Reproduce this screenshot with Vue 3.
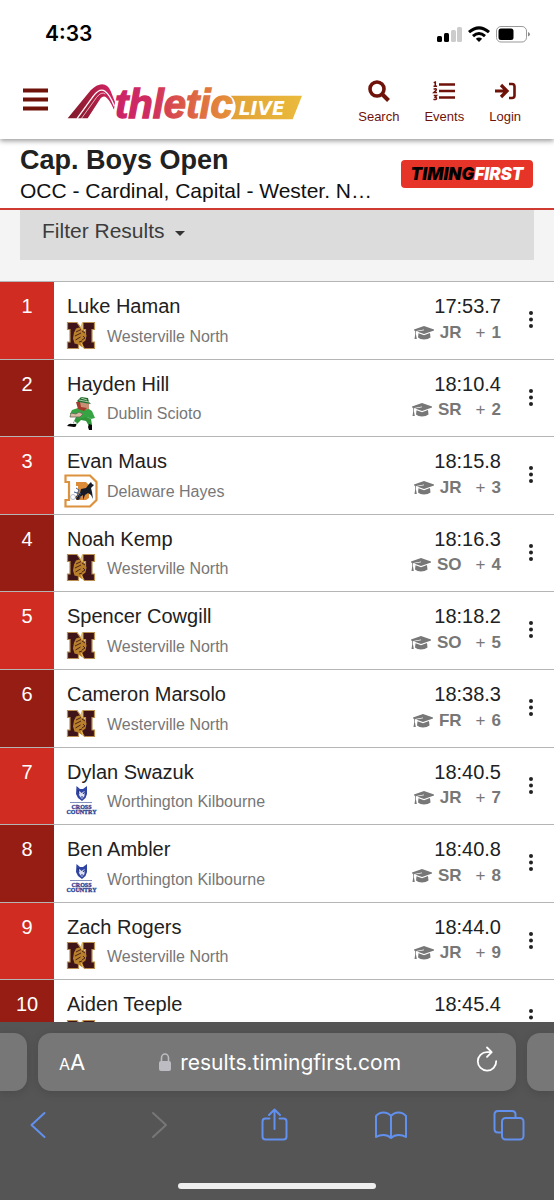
<script setup>
const results = [
  { name: 'Luke Haman', team: 'Westerville North', logo: 'north', time: '17:53.7', year: 'JR' },
  { name: 'Hayden Hill', team: 'Dublin Scioto', logo: 'scioto', time: '18:10.4', year: 'SR' },
  { name: 'Evan Maus', team: 'Delaware Hayes', logo: 'hayes', time: '18:15.8', year: 'JR' },
  { name: 'Noah Kemp', team: 'Westerville North', logo: 'north', time: '18:16.3', year: 'SO' },
  { name: 'Spencer Cowgill', team: 'Westerville North', logo: 'north', time: '18:18.2', year: 'SO' },
  { name: 'Cameron Marsolo', team: 'Westerville North', logo: 'north', time: '18:38.3', year: 'FR' },
  { name: 'Dylan Swazuk', team: 'Worthington Kilbourne', logo: 'kilbourne', time: '18:40.5', year: 'JR' },
  { name: 'Ben Ambler', team: 'Worthington Kilbourne', logo: 'kilbourne', time: '18:40.8', year: 'SR' },
  { name: 'Zach Rogers', team: 'Westerville North', logo: 'north', time: '18:44.0', year: 'JR' },
  { name: 'Aiden Teeple', team: 'Westerville North', logo: 'north', time: '18:45.4', year: 'JR' },
]
</script>

<template>
  <div class="page">
    <div class="status">
      <span class="clock">4:33</span>
      <svg class="signals" width="96" height="18" viewBox="0 0 96 18">
        <rect x="2" y="11" width="5" height="6" rx="1.5" fill="#000" />
        <rect x="9" y="8" width="5" height="9" rx="1.5" fill="#000" />
        <rect x="16" y="5" width="5" height="12" rx="1.5" fill="#ccc" />
        <rect x="22" y="2" width="5" height="15" rx="1.5" fill="#ccc" />
        <g fill="none" stroke="#000" stroke-width="3">
          <path d="M34 7.200Q44 -1.500 54 7.200" />
          <path d="M38 11.200Q44 5.800 50 11.200" />
        </g>
        <path d="M40.800 13.800Q44 11.200 47.200 13.800L44 17Z" />
        <rect x="61.500" y="1.500" width="30" height="15.500" rx="4.500" fill="none" stroke="#999" />
        <rect x="63.500" y="3.500" width="15" height="11.500" rx="2.500" />
        <path d="M93 7v4.500q2-.8 2-2.250t-2-2.250z" fill="#888" />
      </svg>
    </div>

    <header class="site">
      <button class="burger" aria-label="Menu">
        <svg width="25" height="23" viewBox="0 0 25 23">
          <path d="M0 2.500h25M0 11.500h25M0 20.500h25" stroke="#6f1209" stroke-width="3.800" />
        </svg>
      </button>
      <a class="brand" href="#" aria-label="Athletic Live">
        <svg width="236" height="37" viewBox="201 248 708 111">
          <defs>
            <linearGradient id="peak" gradientUnits="userSpaceOnUse" x1="203" y1="353" x2="343" y2="300">
              <stop offset="0" stop-color="#7d1a29" />
              <stop offset=".6" stop-color="#a81e3f" />
              <stop offset="1" stop-color="#cf2263" />
            </linearGradient>
            <linearGradient id="word" gradientUnits="userSpaceOnUse" x1="345" y1="0" x2="700" y2="0">
              <stop offset="0" stop-color="#cb2168" />
              <stop offset=".3" stop-color="#cf2d60" />
              <stop offset=".55" stop-color="#da5549" />
              <stop offset="1" stop-color="#e69637" />
            </linearGradient>
            <linearGradient id="flag" gradientUnits="userSpaceOnUse" x1="692" y1="0" x2="906" y2="0">
              <stop offset="0" stop-color="#e2a137" />
              <stop offset="1" stop-color="#eabb3c" />
            </linearGradient>
          </defs>
          <path fill="url(#peak)" d="M203 354L272 270Q290 252 306 252Q324 253 332 272L345 305L342 328Q328 296 316 289Q308 286 302 294L263 354Z" />
          <path fill="none" stroke="#fff" stroke-width="4" d="M231 355L281 286Q300 262 315 273Q330 284 343 318" />
          <path fill="none" stroke="#fff" stroke-width="2" d="M244 355L289 292Q304 272 316 281" />
          <text class="word" x="345" y="353" fill="url(#word)" stroke="url(#word)">thletic</text>
          <path fill="url(#flag)" d="M692 286H906L878 357H692Q707 340 707 318Q706 298 692 286Z" />
          <text class="live" x="716" y="345">LIVE</text>
        </svg>
      </a>
      <nav>
        <a href="#">
          <svg width="24" height="24" viewBox="0 0 24 24" fill="none" stroke="#6f1209">
            <circle cx="10" cy="10" r="7" stroke-width="3.600" />
            <path d="M15 15l6.500 6.500" stroke-width="4" />
          </svg>
          Search
        </a>
        <a href="#">
          <svg width="24" height="24" viewBox="0 0 24 24" fill="none" stroke="#6f1209">
            <path d="M7 5.500h16M7 12h16M7 18.500h16" stroke-width="2.400" />
            <path d="M1.700 3.600L3.300 3V7M1.500 7.200h3.600M1.600 10.300Q4.600 9 4.300 11L1.900 13.400H5M1.700 16.500H4.500L3.200 18.200Q5.200 18.600 4.300 20.100Q3.200 21 1.500 20.200" stroke-width="1.500" />
          </svg>
          Events
        </a>
        <a href="#">
          <svg width="24" height="24" viewBox="0 0 24 24" fill="none" stroke="#6f1209" stroke-width="3.200">
            <path d="M2 12H13M8 6l6 6-6 6" />
            <path d="M16 5h3q2.500 0 2.500 2.500v9q0 2.500-2.500 2.500H16" stroke-width="2.600" />
          </svg>
          Login
        </a>
      </nav>
    </header>

    <section class="event">
      <div class="titles">
        <h1>Cap. Boys Open</h1>
        <p>OCC - Cardinal, Capital - Wester. N…</p>
      </div>
      <a class="timing" href="#"><span>TIMING</span>FIRST</a>
    </section>

    <main>
      <div class="filter-area">
        <button class="filter">Filter Results <i class="caret"></i></button>
      </div>
      <table>
        <tbody>
          <tr v-for="(r, i) in results" :key="r.name">
            <td class="rank">{{ i + 1 }}</td>
            <td class="athlete">
              <div class="name">{{ r.name }}</div>
              <div class="team">
                <svg v-if="r.logo === 'north'" width="34" height="34" viewBox="0 0 34 34">
                  <path d="M3.500 3.500H13L21.500 15.500V10.500H19V3.500H30.500V10.500H28V23H30.500V29.500H20.500L12 18.500V23H14.500V29.500H3.500V23H6V10.500H3.500Z" fill="#3f1419" stroke="#b98f52" stroke-width="1.200" />
                  <path d="M12 9.500l3-1 2.500 1 3 2 2 5-1 5-4 3 1 4-4-3-4-1-1.500-5 1-6Z" fill="#b87f2c" />
                  <path d="M12 13l5-2.500M11 17l6-3M11.500 21l5-3M18 12l3 2M19 17l2 2-3 2M15 23l3-1" stroke="#4c2418" stroke-width="1" fill="none" />
                  <path d="M18.500 4l-1.500 4 1.500 3M17.500 24l1.500 4" stroke="#e8b84a" stroke-width="1.300" fill="none" />
                </svg>
                <svg v-else-if="r.logo === 'scioto'" width="34" height="34" viewBox="0 0 34 34">
                  <path d="M12 21l9-1 6 3 1 6-3 1-3-5-5-1-5 5-3-2Z" fill="#2f963a" />
                  <path d="M14 12l8-1 6 4 3 7-4 1-4-2-9 2-3-4-5-1 2-4Z" fill="#35a544" />
                  <path d="M15 6l10 1v6l-6 1-4-3Z" fill="#c98f75" />
                  <path d="M12 6l4 0 1 5 6 1-3 3-6-2Z" fill="#a13a2a" />
                  <path d="M13 5l4-4 7 1 1 4 2 2-13-2Z" fill="#216e35" />
                  <path d="M15 4l10 2M17 2l6 2" stroke="#a9c79a" />
                  <path d="M7 17l5 1 3-2 4 2-3 3-6 0-4 0Z" fill="#d8baa3" stroke="#5d6650" stroke-width=".8" />
                  <path d="M10 25l3 2-2 3-2 0Z" fill="#eee" />
                  <path d="M3 30q2-3 5-2l4 0q1 3-2 3ZM25 28l3 1 0 5-3 0-1-3Z" fill="#080808" />
                </svg>
                <svg v-else-if="r.logo === 'hayes'" width="34" height="34" viewBox="0 0 34 34">
                  <path d="M1.500 1.500H26L32.500 8V26L26 32.500H1.500V26H5V8H1.500Z" fill="#fff" stroke="#dd913d" stroke-width="2.200" />
                  <path d="M12 8h10l3 3v13l-3 2H12v-4h2v-10h-2Z" fill="#dc8b38" />
                  <path d="M16 19l1-4 5-1 3-4 2-2 1 2 2 1-2 2-1 1 1 4 1 7-2-4-3-2-3 2-2 5 0-5-3 2-2 3-2-1Z" fill="#151c28" />
                  <path d="M12 14l3 2-2 4M10 18l7 2M13 20l4 3" stroke="#45608c" fill="none" />
                  <circle cx="9" cy="23" r="2.500" fill="none" stroke="#a6aebb" stroke-width=".8" />
                  <circle cx="14" cy="23.500" r="2" fill="none" stroke="#26344e" />
                </svg>
                <svg v-else width="34" height="34" viewBox="0 0 34 34">
                  <path d="M12.500 2l3.500 3h3l4-3v8l-1.500 4-3.500 3-4-3-2-4Z" fill="#3044a4" />
                  <path d="M15.500 7l2 2 3-2 0 5-2.500 3-2.500-3-1-3Z" fill="#dce2f4" />
                  <path d="M14 6l1 4M20.500 8l-1.500 2M17 13h2" stroke="#1d2e78" />
                  <path d="M6 18.500H28" stroke="#8490bd" />
                  <text class="crest" x="17.500" y="25">CROSS</text>
                  <text class="crest" x="17.500" y="30">COUNTRY</text>
                </svg>
                <span>{{ r.team }}</span>
              </div>
            </td>
            <td class="mark">
              <div class="name">{{ r.time }}</div>
              <div class="grade">
                <svg width="20" height="14" viewBox="0 0 20 14" fill="#777">
                  <path d="M10 0L20 3.500V4.500L10 8L3 5.500L10 4.200V3.600L2.300 5Q1.800 6 1.900 8L2.800 13H.5L1.200 8.500V4.800L0 4.400V3.500Z" />
                  <path d="M4.500 7.200L10 9.200L16 7L16.500 11.500Q14 13.500 10 13.500T4 11.500Z" />
                </svg>
                <b class="year">{{ r.year }}</b>
                <span class="plus">+</span>
                <b>{{ i + 1 }}</b>
              </div>
            </td>
            <td class="more">
              <button :aria-label="'Options for ' + r.name">
                <svg width="6" height="22" viewBox="0 0 6 22" fill="#222">
                  <circle cx="3" cy="4" r="2" /><circle cx="3" cy="10.500" r="2" /><circle cx="3" cy="17" r="2" />
                </svg>
              </button>
            </td>
          </tr>
        </tbody>
      </table>
    </main>

    <footer>
      <div class="tabs">
        <div class="stub left"></div>
        <div class="address">
          <button class="reader" aria-label="Page settings"><small>A</small>A</button>
          <button class="url">
            <svg width="12" height="18" viewBox="0 0 12 18">
              <path d="M2.500 9V5a3.500 4 0 0 1 7 0v4" fill="none" stroke="#bcbcc2" stroke-width="1.600" />
              <rect y="8" width="12" height="10" rx="2" fill="#bcbcc2" />
            </svg>
            results.timingfirst.com
          </button>
          <button class="reload" aria-label="Reload">
            <svg width="24" height="28" viewBox="0 0 24 28" fill="none" stroke="#fff" stroke-width="1.800" stroke-linecap="round" stroke-linejoin="round">
              <path d="M16.500 6.200H12A9.200 9.200 0 1 0 21.200 15.200M12 1.500l4.700 4.700-4.700 4.700" />
            </svg>
          </button>
        </div>
        <div class="stub right"></div>
      </div>
      <div class="tools">
        <button aria-label="Back"><svg viewBox="0 0 32 36"><path d="M22.500 6L9.500 18L22.500 30" /></svg></button>
        <button aria-label="Forward" disabled><svg viewBox="0 0 32 36"><path d="M13 6L26 18L13 30" /></svg></button>
        <button aria-label="Share"><svg viewBox="0 0 32 36"><path d="M11.500 11.500H7.500q-3 0-3 3V29.500q0 3 3 3H25.500q3 0 3-3V14.500q0-3-3-3H21.500M16.500 22V2.500M11 8L16.500 2.500L22 8" /></svg></button>
        <button aria-label="Bookmarks"><svg viewBox="0 0 32 36"><path d="M16 9Q13 5.500 8.500 5.500T1 9V30Q4 28 8.500 28T16 31Q19 28 23.500 28T31 30V9Q28 5.500 23.500 5.500T16 9V31" /></svg></button>
        <button aria-label="Tabs"><svg viewBox="0 0 32 36"><path d="M8.500 25.500H5q-3.500 0-3.500-3.500V7.500Q1.500 4 5 4H19q3.500 0 3.500 3.500V10.500" /><rect x="9" y="11" width="21.500" height="21.500" rx="3.500" /></svg></button>
      </div>
      <div class="home"></div>
    </footer>
  </div>
</template>

<style>
body { margin: 0; }
</style>

<style scoped>
.page {
  height: 100vh;
  display: flex;
  flex-direction: column;
  overflow: hidden;
  background: #fff;
  color: #212121;
  font-family: "Liberation Sans", Arial, sans-serif;
}
* { box-sizing: border-box; }
button { border: 0; padding: 0; background: none; font: inherit; color: inherit; }
a { color: inherit; text-decoration: none; }
svg { display: block; flex: none; overflow: visible; }

.status {
  flex: none;
  height: 68px;
  display: flex;
  justify-content: space-between;
  align-items: center;
  padding: 0 23px 0 45px;
  background: #fff;
  color: #000;
  z-index: 3;
}
.clock { font: 600 21px/26px Inter, sans-serif; }

.site {
  flex: none;
  height: 71px;
  display: flex;
  align-items: center;
  padding: 0 33px 4px 23px;
  background: #fff;
  box-shadow: 0 2px 5px #0006;
  z-index: 2;
}
.burger { padding-bottom: 4px; }
.brand { margin-left: 19px; }
.word { font: italic bold 120px "Liberation Sans", Arial, sans-serif; stroke-width: 4px; }
.live { font: italic bold 56px "DejaVu Sans", sans-serif; fill: #fff; }
nav { display: flex; gap: 25px; margin-left: auto; }
nav a {
  display: flex;
  flex-direction: column;
  align-items: center;
  gap: 6px;
  font-size: 13px;
  line-height: 16px;
  color: #6f1209;
}

.event {
  flex: none;
  display: flex;
  align-items: center;
  justify-content: space-between;
  gap: 16px;
  height: 71px;
  padding: 0 21px 0 20px;
  border-bottom: 2px solid #cf3a31;
}
.titles { min-width: 0; }
h1 { margin: 0; font-size: 27px; line-height: 34px; }
p { margin: 0; font-size: 21px; line-height: 28px; color: #111; white-space: nowrap; overflow: hidden; text-overflow: ellipsis; }
.timing {
  flex: none;
  width: 132px;
  border-radius: 4px;
  background: #e73428;
  color: #fff;
  text-align: center;
  font: italic 900 17px/28px Inter, sans-serif;
}
.timing span { color: #000; }

main { flex: 1; min-height: 0; overflow: hidden; }
.filter-area { padding: 0 20px 21px; background: #f4f4f4; }
.filter {
  display: flex;
  align-items: center;
  gap: 10px;
  width: 100%;
  height: 50px;
  padding: 0 22px 8px;
  background: #dcdcdc;
  color: #3c3c3c;
  font-size: 21px;
}
.caret { border: 5px solid transparent; border-top-color: #333; border-bottom: 0; margin-top: 4px; }

table { width: 100%; border-collapse: separate; border-spacing: 0; }
td { padding: 10px 0 8px; border-top: 1px solid #b5b5b5; vertical-align: top; }
.rank { width: 54px; background: #d02c21; color: #fff; text-align: center; font-size: 20px; line-height: 1.43; }
tr:nth-child(even) .rank { background: #961d14; }
.athlete { padding-left: 13px; }
.name { font-size: 20px; line-height: 1.43; }
.team { display: flex; align-items: center; gap: 9px; height: 30px; font-size: 16px; color: #777; }
.team svg { margin: -2px 0 -2px -3px; }
.team span { padding-top: 2px; }
.crest { font: bold 6px "Liberation Serif", serif; fill: #2d3d91; stroke: #2d3d91; stroke-width: .3px; text-anchor: middle; }
.mark { text-align: right; }
.grade { display: flex; justify-content: flex-end; align-items: center; height: 24px; font-size: 17px; color: #777; }
.year { margin: 0 14px 0 6px; }
.plus { margin-right: 6px; }
.more { width: 53px; }
.more button { display: block; margin: 17px auto 0; padding: 0 4px 0 10px; }

footer { flex: none; padding-top: 11px; background: #555; color: #fff; z-index: 1; }
.tabs { display: flex; gap: 11px; height: 58px; }
.stub { width: 27px; background: #777; box-shadow: 0 2px 10px #0002; }
.left { border-radius: 0 13px 13px 0; }
.right { border-radius: 13px 0 0 13px; }
.address {
  flex: 1;
  display: flex;
  align-items: center;
  justify-content: space-between;
  padding: 0 17px 0 21px;
  border-radius: 13px;
  background: #777;
  box-shadow: 0 2px 10px #0002;
}
.reader { font: 22px Inter, sans-serif; }
.reader small { font-size: 16px; }
.reload { padding-bottom: 4px; }
.url { display: flex; align-items: center; gap: 9px; font: 21px Inter, sans-serif; }
.tools { display: flex; justify-content: space-between; padding: 16px 29px 0 22px; }
.tools svg { width: 32px; height: 36px; fill: none; stroke: #6290ee; stroke-width: 2; stroke-linecap: round; stroke-linejoin: round; }
.tools button:disabled svg { stroke: #777; }
.home { width: 198px; height: 6px; margin: 40px auto 11px; border-radius: 3px; background: #eee; }
</style>
